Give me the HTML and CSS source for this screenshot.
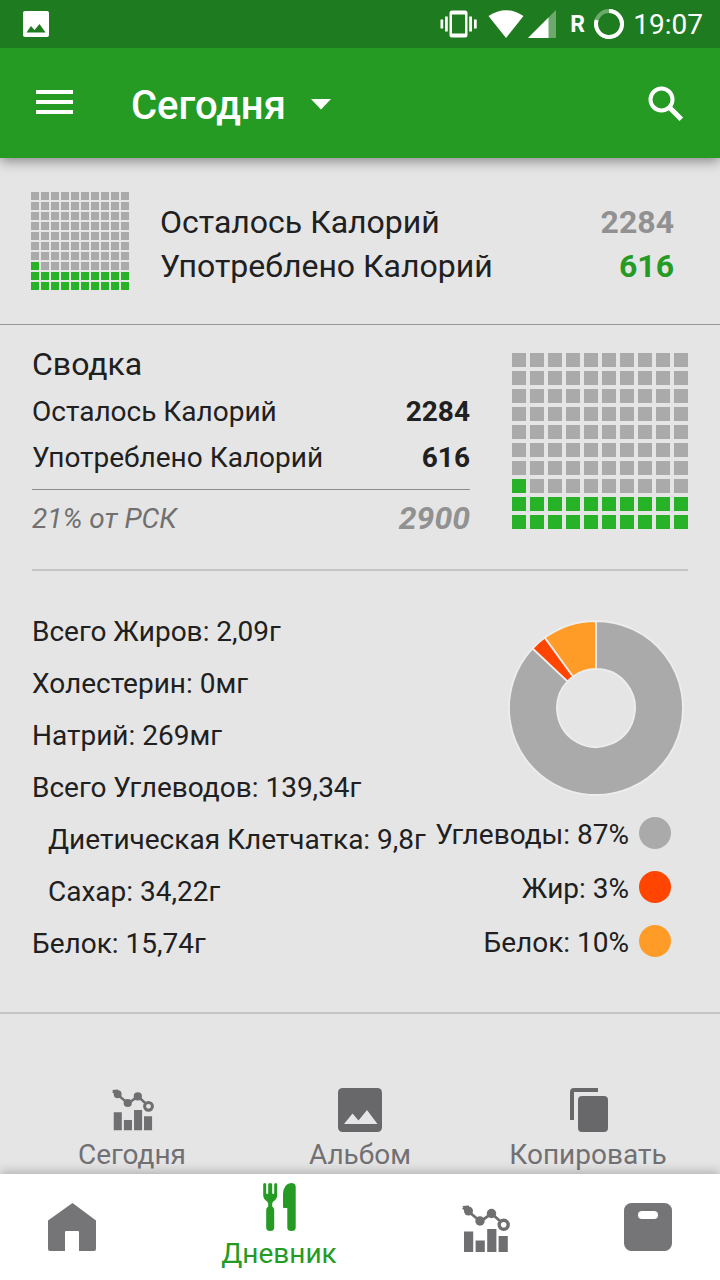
FILE: index.html
```html
<!DOCTYPE html>
<html lang="ru">

<head>
    <meta charset="UTF-8">
    <meta name="viewport" content="width=device-width, initial-scale=1.0">
    <title>Дневник</title>
    <link rel="stylesheet" href="styles.css">
</head>

<body>
    <div class="screen">
        <!-- Status bar -->
        <div class="status-bar">
            <svg class="status-picture" width="26" height="26" viewBox="0 0 26 26">
                <rect width="26" height="26" rx="2" fill="#fff"/>
                <path d="M3.500 21.500L8 15l3.500 4L16.500 13l6 8.500z" fill="#1f7b1f"/>
            </svg>
            <div class="status-icons">
                <svg width="38" height="30" viewBox="0 0 38 30" fill="#fff">
                    <path d="M12 1.500h13a2.500 2.500 0 0 1 2.500 2.500v22A2.500 2.500 0 0 1 25 28.500H12a2.500 2.500 0 0 1-2.500-2.500V4A2.500 2.500 0 0 1 12 1.500zm0 4v19h13v-19z" fill-rule="evenodd"/>
                    <path d="M.5 10.500h2.700v9H.5zM5 7.500h2.800v15H5zM29.200 7.500H32v15h-2.800zM34 10.500h2.700v9H34z"/>
                </svg>
                <svg class="wifi" width="36" height="30" viewBox="0 0 36 30">
                    <path d="M.5 7Q18-4.500 35.500 7L18 29z" fill="#fff"/>
                </svg>
                <svg class="signal" width="28" height="28" viewBox="0 0 28 28">
                    <path d="M0 28L28 0v28z" fill="#fff" fill-opacity=".35"/>
                    <path d="M0 28L20.500 7.500V28z" fill="#fff"/>
                </svg>
                <span class="roaming">R</span>
                <svg class="battery" width="30" height="30" viewBox="0 0 30 30" fill="none" stroke-width="4">
                    <circle cx="15" cy="15" r="13" stroke="#fff" stroke-opacity=".35"/>
                    <path d="M15 2A13 13 0 1 1 2.640 11" stroke="#fff"/>
                </svg>
                <span class="clock">19:07</span>
            </div>
        </div>

        <!-- App bar -->
        <header class="app-bar">
            <svg width="37" height="26" viewBox="0 0 37 26" fill="#fff">
                <path d="M0 0h37v4H0zM0 10h37v4H0zM0 20h37v4H0z"/>
            </svg>
            <h1>Сегодня</h1>
            <svg class="caret" width="20" height="11" viewBox="0 0 20 11"><path d="M0 0h20L10 10.500z" fill="#fff"/></svg>
            <svg class="search" width="36" height="36" viewBox="0 0 36 36" fill="none" stroke="#fff">
                <circle cx="13.500" cy="13.500" r="11" stroke-width="4"/>
                <path d="M22 22L33.300 33.300" stroke-width="5"/>
            </svg>
        </header>

        <!-- Calories header -->
        <section class="calories">
            <div class="cells cells-small"></div>
            <div class="calories-rows">
                <div class="row"><span>Осталось Калорий</span><b class="muted">2284</b></div>
                <div class="row"><span>Употреблено Калорий</span><b class="green">616</b></div>
            </div>
        </section>

        <!-- Summary -->
        <section class="summary">
            <div class="summary-rows">
                <h2>Сводка</h2>
                <div class="row"><span>Осталось Калорий</span><b>2284</b></div>
                <div class="row"><span>Употреблено Калорий</span><b>616</b></div>
                <div class="row total"><span>21% от РСК</span><b>2900</b></div>
            </div>
            <div class="cells cells-large"></div>
        </section>

        <!-- Nutrients -->
        <section class="nutrients">
            <ul class="nutrient-list">
                <li>Всего Жиров: 2,09г</li>
                <li>Холестерин: 0мг</li>
                <li>Натрий: 269мг</li>
                <li>Всего Углеводов: 139,34г</li>
                <li class="sub">Диетическая Клетчатка: 9,8г</li>
                <li class="sub">Сахар: 34,22г</li>
                <li>Белок: 15,74г</li>
            </ul>
            <div class="chart">
                <svg class="donut" width="176" height="176" viewBox="-88 -88 176 176" stroke="#ededed" stroke-width="1.800">
                    <path d="M0-87A87 87 0 1 1-63.420-59.560L-28.430-26.700A39 39 0 1 0 0-39z" fill="#aaa"/>
                    <path d="M-63.420-59.560A87 87 0 0 1-51.140-70.380L-22.920-31.550A39 39 0 0 0-28.430-26.700z" fill="#ff4500"/>
                    <path d="M-51.140-70.380A87 87 0 0 1 0-87V-39A39 39 0 0 0-22.920-31.550z" fill="#ff9c27"/>
                </svg>
                <ul class="legend">
                    <li>Углеводы: 87%<i class="dot carbs"></i></li>
                    <li>Жир: 3%<i class="dot fat"></i></li>
                    <li>Белок: 10%<i class="dot protein"></i></li>
                </ul>
            </div>
        </section>

        <!-- Actions -->
        <div class="actions">
            <div class="action today">
                <svg width="42" height="44" viewBox="0 0 48 50">
                    <use href="#stats"/>
                </svg>
                <span>Сегодня</span>
            </div>
            <div class="action album">
                <svg width="44" height="44" viewBox="0 0 44 44">
                    <rect width="44" height="44" rx="4.500" fill="#68686a"/>
                    <path d="M6 36l8.500-10.500 6 7L29 22l10.500 14z" fill="#e5e5e6"/>
                </svg>
                <span>Альбом</span>
            </div>
            <div class="action copy">
                <svg width="38" height="44" viewBox="0 0 38 44" fill="#68686a">
                    <path d="M0 32V4a4 4 0 0 1 4-4h24v4H4v28z"/>
                    <rect x="8" y="8" width="30" height="36" rx="4"/>
                </svg>
                <span>Копировать</span>
            </div>
        </div>

        <!-- Bottom navigation -->
        <nav class="bottom-nav">
            <a class="tab home">
                <svg width="48" height="48" viewBox="0 0 48 48">
                    <path d="M24.500 0L48 17.500V46a2 2 0 0 1-2 2H31V29a1 1 0 0 0-1-1H18a1 1 0 0 0-1 1v19H2a2 2 0 0 1-2-2V17.500z" fill="#757476"/>
                </svg>
            </a>
            <a class="tab diary active">
                <svg width="34" height="48" viewBox="0 0 34 48" fill="#259b24">
                    <path d="M1.700 0Q3.200 0 3.200 1.500V10Q3.200 11 4.200 11T5.200 10V1.500Q5.200 0 7.200 0T9.200 1.500V10Q9.200 11 10.200 11T11.200 10V1.500Q11.200 0 12.700 0T14.200 1.500V12Q14.200 16 10.200 18.500Q9.200 19.500 9.200 21V23.500Q11.200 24.500 11.200 27V44.500Q11.200 48 7.200 48T3.200 44.500V27Q3.200 24.500 5.200 23.500V21Q5.200 19.500 4.200 18.500Q.2 16 .2 12V1.500Q.2 0 1.700 0z"/>
                    <path d="M28 0Q32.700 0 32.700 4V44.500Q32.700 48 28.500 48T24.300 44.500V25H21Q20 25 20 24V11Q20.500 1 28 0z"/>
                </svg>
                <span>Дневник</span>
            </a>
            <a class="tab stats">
                <svg width="48" height="50" viewBox="0 0 48 50">
                    <g id="stats" fill="#6f6e70">
                        <path d="M2 27.500h9.200V48H2zM13.600 36.500h9.200V48h-9.200zM25.200 25h9.200v23h-9.200zM36.600 32h9.200v16h-9.200z"/>
                        <path d="M1 3.500L6.500 7.500 18.500 17.500 29.500 9.500 38 17" fill="none" stroke="#6f6e70" stroke-width="2.800"/>
                        <path d="M0 2l7-.5v6z"/>
                        <circle cx="6.500" cy="7" r="4.500"/>
                        <circle cx="18" cy="17" r="4.700"/>
                        <circle cx="29.500" cy="9.500" r="4.700"/>
                        <circle cx="41.700" cy="20.800" r="4.500" fill="none" stroke="#6f6e70" stroke-width="3.400"/>
                    </g>
                </svg>
            </a>
            <a class="tab weight">
                <svg width="48" height="48" viewBox="0 0 48 48">
                    <rect width="48" height="48" rx="7.500" fill="#757476"/>
                    <rect x="14" y="8" width="20" height="8" rx="4" fill="#fff"/>
                </svg>
            </a>
        </nav>
    </div>

    <script>
        // Fill both calorie grids, 21 of 100 cells are used (from the bottom up)
        const used = 21;
        document.querySelectorAll('.cells').forEach(function (grid) {
            for (let i = 0; i < 100; i++) {
                const cell = document.createElement('i');
                const fromBottom = (9 - Math.floor(i / 10)) * 10 + i % 10;
                if (fromBottom < used) {
                    cell.className = 'used';
                }
                grid.appendChild(cell);
            }
        });
    </script>
</body>

</html>
```

FILE: styles.css
```css
* {
    box-sizing: border-box;
}

body {
    margin: 0;
    font-family: Roboto, "Noto Sans", sans-serif;
    font-size: 28px;
    color: #202020;
    background: #e5e5e6;
}

h1, h2, ul {
    margin: 0;
    padding: 0;
    list-style: none;
}

svg {
    display: block;
    flex-shrink: 0;
}

.screen {
    width: 720px;
    height: 1280px;
    display: flex;
    flex-direction: column;
    overflow: hidden;
}

/* Status bar */
.status-bar {
    height: 48px;
    flex-shrink: 0;
    padding: 0 17px 0 23px;
    display: flex;
    justify-content: space-between;
    align-items: center;
    background: #1f7b1f;
    color: #fff;
    z-index: 2;
}

.status-icons {
    display: flex;
    align-items: center;
}

.wifi {
    margin-left: 10px;
}

.signal {
    margin-left: 4px;
}

.roaming {
    width: 15px;
    margin: 0 9px 0 14px;
    font-size: 23px;
    font-weight: bold;
}

.clock {
    margin-left: 9px;
    padding-top: 2px;
    line-height: 46px;
}

/* App bar */
.app-bar {
    height: 110px;
    flex-shrink: 0;
    padding: 0 36px;
    display: flex;
    align-items: center;
    background: #259b24;
    color: #fff;
    box-shadow: 0 3px 12px rgba(0, 0, 0, 0.42);
    z-index: 1;
}

.app-bar h1 {
    margin-left: 58px;
    padding-top: 4px;
    font-size: 40px;
    font-weight: 500;
}

.caret {
    margin: 2px 0 0 25px;
}

.search {
    margin: 2px 0 0 auto;
}

/* Calorie grids */
.cells {
    display: grid;
    flex-shrink: 0;
}

.cells i {
    background: #aaa;
}

.cells .used {
    background: #27b227;
}

.cells-small {
    grid-template: repeat(10, 8px) / repeat(10, 8px);
    gap: 2px;
}

.cells-large {
    grid-template: repeat(10, 14px) / repeat(10, 14px);
    gap: 4px;
}

.row {
    display: flex;
    justify-content: space-between;
}

/* Calories header */
.calories {
    height: 167px;
    flex-shrink: 0;
    padding: 34px 46px 0 31px;
    display: flex;
    align-items: flex-start;
    border-bottom: 1px solid #969696;
}

.calories-rows {
    flex: 1;
    margin: 8px 0 0 31px;
    font-size: 32px;
    line-height: 44px;
}

.muted {
    color: #919191;
}

.green {
    color: #259b24;
}

/* Summary */
.summary {
    height: 244px;
    flex-shrink: 0;
    margin: 0 32px;
    padding-top: 16px;
    display: flex;
    justify-content: space-between;
    align-items: flex-start;
}

.summary-rows {
    width: 438px;
    line-height: 46px;
}

.summary h2 {
    margin-bottom: 2px;
    font-size: 32px;
    font-weight: normal;
}

.summary .cells {
    margin-top: 12px;
}

.summary .total {
    margin-top: 8px;
    border-top: 1px solid #8d8d8d;
    line-height: 57px;
    font-style: italic;
    color: #707070;
}

.total b {
    font-size: 32px;
    color: #919191;
}

/* Nutrients */
.nutrients {
    height: 445px;
    flex-shrink: 0;
    padding: 36px 32px 0;
    display: flex;
    justify-content: space-between;
    background: linear-gradient(#c4c4c4, #c4c4c4) center top / 656px 2px no-repeat;
    border-bottom: 2px solid #c4c4c4;
}

.nutrient-list li {
    height: 52px;
    line-height: 53px;
    white-space: nowrap;
}

.nutrient-list .sub {
    padding-left: 16px;
}

.chart {
    display: flex;
    flex-direction: column;
    align-items: flex-end;
    padding-top: 15px;
}

.donut {
    margin-right: 4px;
}

.legend {
    margin: 11px 17px 0 0;
}

.legend li {
    height: 54px;
    display: flex;
    justify-content: flex-end;
    align-items: center;
    white-space: nowrap;
}

.dot {
    width: 32px;
    height: 32px;
    margin: -3px 0 0 10px;
    border-radius: 50%;
}

.carbs {
    background: #aaa;
}

.fat {
    background: #ff4500;
}

.protein {
    background: #ff9c27;
}

/* Actions */
.actions {
    flex: 1;
    min-height: 0;
    padding: 74px 18px 0;
    display: flex;
    color: #717072;
}

.action {
    flex: 1;
    display: flex;
    flex-direction: column;
    align-items: center;
    line-height: 46px;
}

.today svg, .copy svg {
    margin-left: 2px;
}

/* Bottom navigation */
.bottom-nav {
    height: 106px;
    flex-shrink: 0;
    display: flex;
    background: #fff;
    box-shadow: 0 -2px 10px rgba(0, 0, 0, 0.25);
}

.tab {
    display: flex;
    flex-direction: column;
    align-items: center;
    justify-content: center;
    width: 144px;
}

.tab.active {
    width: 270px;
    justify-content: flex-start;
    padding-top: 9px;
    color: #259b24;
    line-height: 46px;
}

.diary svg {
    margin-left: 2px;
}

.stats {
    padding-top: 3px;
}

.weight {
    margin-left: 18px;
}
```
